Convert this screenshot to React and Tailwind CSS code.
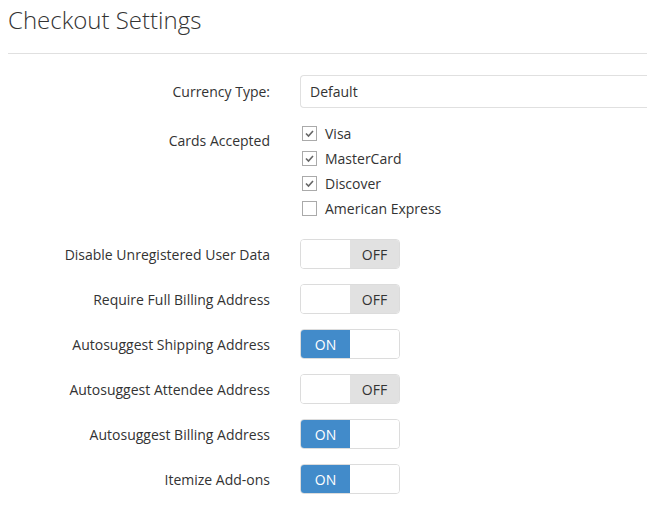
import { useState } from "react";

const toggles = [
  { label: "Disable Unregistered User Data", on: false },
  { label: "Require Full Billing Address", on: false },
  { label: "Autosuggest Shipping Address", on: true },
  { label: "Autosuggest Attendee Address", on: false },
  { label: "Autosuggest Billing Address", on: true },
  { label: "Itemize Add-ons", on: true },
];

const cards = [
  { name: "Visa", checked: true },
  { name: "MasterCard", checked: true },
  { name: "Discover", checked: true },
  { name: "American Express", checked: false },
];

function Toggle({ on }) {
  return (
    <div className="flex w-[100px] h-[30px] rounded-[4px] border border-[#dcdcdc] overflow-hidden text-[14px]">
      {on ? (
        <>
          <div className="w-1/2 bg-[#428bca] text-white flex items-center justify-center">ON</div>
          <div className="w-1/2 bg-white"></div>
        </>
      ) : (
        <>
          <div className="w-1/2 bg-white"></div>
          <div className="w-1/2 bg-[#e1e1e1] text-[#333] flex items-center justify-center">OFF</div>
        </>
      )}
    </div>
  );
}

function Checkbox({ checked }) {
  return (
    <div className="w-[15px] h-[15px] border border-[#aaa] bg-white flex items-center justify-center">
      {checked && (
        <svg width="11" height="11" viewBox="0 0 11 11">
          <path d="M2 5.5 L4.5 8 L9 3" fill="none" stroke="#666" strokeWidth="1.6" />
        </svg>
      )}
    </div>
  );
}

export default function App() {
  const [items] = useState(toggles);

  return (
    <div className="w-[647px] h-[507px] overflow-hidden bg-white text-[#333] pl-2" style={{ fontFamily: "'Open Sans', sans-serif" }}>
      <h1 className="text-[24px] font-light leading-[32px] pt-[4px] pb-[17px] border-b border-[#e0e0e0] text-[#333]">Checkout Settings</h1>

      <div className="grid grid-cols-[262px_1fr] gap-x-[30px] mt-[21px] text-[14px]">
        <div className="text-right flex items-center justify-end h-[33px]">Currency Type:</div>
        <div className="h-[33px] border border-[#e0e0e0] border-r-0 rounded-l-[4px] flex items-center pl-[9px]">Default</div>

        <div className="text-right pt-[10px] mt-[13px] leading-[20px]">Cards Accepted</div>
        <div className="mt-[13px] flex flex-col">
          {cards.map((c) => (
            <div key={c.name} className="h-[25px] flex items-center gap-[8px] pl-[2px]">
              <Checkbox checked={c.checked} />
              <span>{c.name}</span>
            </div>
          ))}
        </div>

        {items.map((t, i) => (
          <div key={t.label} className="contents">
            <div className={`text-right flex items-center justify-end h-[30px] ${i === 0 ? "mt-[18px]" : "mt-[15px]"}`}>{t.label}</div>
            <div className={i === 0 ? "mt-[18px]" : "mt-[15px]"}>
              <Toggle on={t.on} />
            </div>
          </div>
        ))}
      </div>
    </div>
  );
}
